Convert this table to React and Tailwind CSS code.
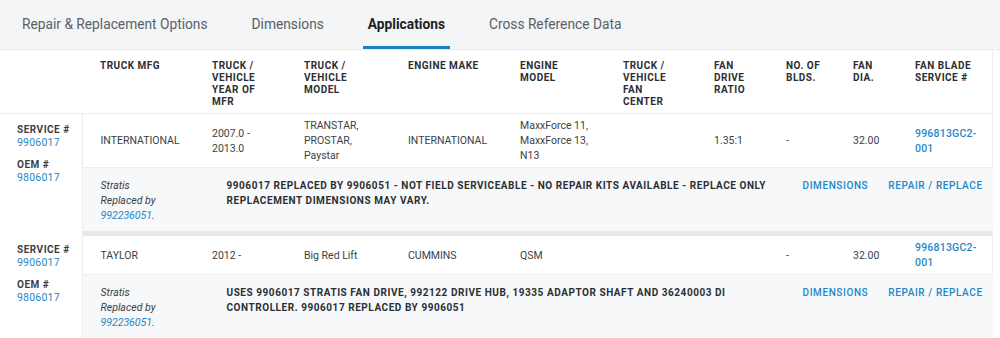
import React from 'react'

const tabs = ["Repair & Replacement Options", "Dimensions", "Applications", "Cross Reference Data"]

const cols = [
    { label: "Truck Mfg", w: "w-[112px]", pr: "pr-[10px]" },
    { label: "Truck / Vehicle Year of Mfr", w: "w-[92px]", pr: "pr-[19px]" },
    { label: "Truck / Vehicle Model", w: "w-[104px]", pr: "pr-[22px]" },
    { label: "Engine Make", w: "w-[112px]", pr: "pr-[10px]" },
    { label: "Engine Model", w: "w-[103px]", pr: "pr-[15px]" },
    { label: "Truck / Vehicle Fan Center", w: "w-[91px]", pr: "pr-[18px]" },
    { label: "Fan Drive Ratio", w: "w-[72px]", pr: "pr-[8px]" },
    { label: "No. of Blds.", w: "w-[67px]", pr: "pr-[8px]" },
    { label: "Fan Dia.", w: "w-[62px]", pr: "pr-[8px]" },
    { label: "Fan Blade Service #", w: "w-[96px]", pr: "pr-[10px]" },
]

const rows = [
    {
        cells: ["INTERNATIONAL", "2007.0 - 2013.0", "TRANSTAR, PROSTAR, Paystar", "INTERNATIONAL", "MaxxForce 11, MaxxForce 13, N13", "", "1.35:1", "-", "32.00"],
        note: "9906017 REPLACED BY 9906051 - NOT FIELD SERVICEABLE - NO REPAIR KITS AVAILABLE - REPLACE ONLY REPLACEMENT DIMENSIONS MAY VARY.",
    },
    {
        cells: ["TAYLOR", "2012 -", "Big Red Lift", "CUMMINS", "QSM", "", "", "-", "32.00"],
        note: "USES 9906017 STRATIS FAN DRIVE, 992122 DRIVE HUB, 19335 ADAPTOR SHAFT AND 36240003 DI CONTROLLER. 9906017 REPLACED BY 9906051",
    },
]

function Group({ row, last }) {
    return (
        <>
            <tr>
                <td rowSpan={2} className="align-top pl-[17px] pt-[9px] border-r border-[#e9ecef] bg-white">
                    <div className="text-[10px] font-bold tracking-[0.05em] text-[#3a3f44] leading-[13px]">SERVICE #</div>
                    <a href="#" className="block text-[10.5px] text-[#1f87c6] leading-[13px] tracking-[0.02em]">9906017</a>
                    <div className="text-[10px] font-bold tracking-[0.05em] text-[#3a3f44] leading-[13px] mt-[9px]">OEM #</div>
                    <a href="#" className="block text-[10.5px] text-[#1f87c6] leading-[13px] tracking-[0.02em]">9806017</a>
                </td>
                {row.cells.map((c, i) => (
                    <td key={i} className={`pl-[18px] ${cols[i].pr} py-[4px] text-[10.5px] leading-[15px] text-[#3a3f44] align-middle`}>
                        {c}
                    </td>
                ))}
                <td className="pl-[18px] py-[4px] pr-[10px] text-[10.5px] leading-[15px] align-middle">
                    <a href="#" className="text-[#1f87c6] font-medium tracking-[0.02em]">996813GC2-<br />001</a>
                </td>
            </tr>
            <tr>
                <td colSpan={10} className={`bg-[#f6f8fa] border-t border-[#eceff2] ${last ? "" : "border-b-[5px] border-b-[#e6e9ec]"}`}>
                    <div className="flex items-start pl-[18px] pt-[10px] pb-[8px]">
                        <div className="w-[126px] shrink-0 text-[10.5px] leading-[15px] italic text-[#3a3f44]">
                            Stratis<br />Replaced by<br />
                            <a href="#" className="text-[#1f87c6]">992236051</a>.
                        </div>
                        <div className="w-[560px] shrink-0 text-[10px] font-bold leading-[15px] tracking-[0.055em] text-[#2b2f33]">
                            {row.note}
                        </div>
                        <a href="#" className="ml-[16px] text-[10px] font-medium leading-[15px] tracking-[0.06em] text-[#1f87c6]">DIMENSIONS</a>
                        <a href="#" className="ml-[20px] text-[10px] font-medium leading-[15px] tracking-[0.06em] text-[#1f87c6]">REPAIR / REPLACE</a>
                    </div>
                </td>
            </tr>
        </>
    )
}

export default function App() {
    return (
        <div className="w-[1000px] h-[338px] overflow-hidden bg-white font-['Roboto',sans-serif]">
            <div className="flex h-[50px] bg-[#f3f5f7] border-b border-[#e9ecef]">
                {tabs.map((t) => (
                    <div key={t} className="px-[17px] flex">
                        <span className={`px-[5px] flex items-center text-[13.75px] border-b-[3px] pt-[3px] ${t === "Applications" ? "font-bold text-[#1e2124] border-[#1b80c3]" : "text-[#5a6066] border-transparent"}`}>
                            {t}
                        </span>
                    </div>
                ))}
            </div>
            <div className="w-[993px] border-r border-[#eceff2]">
                <table className="w-full table-fixed border-collapse">
                    <colgroup>
                        <col className="w-[82px]" />
                        {cols.map((c) => (
                            <col key={c.label} className={c.w} />
                        ))}
                    </colgroup>
                    <thead>
                        <tr className="border-b border-[#e9ecef]">
                            <th></th>
                            {cols.map((c) => (
                                <th key={c.label} className={`pl-[18px] ${c.pr} pt-[10px] pb-[5px] text-left align-top text-[10px] font-bold uppercase leading-[12px] tracking-[0.05em] text-[#2b2f33]`}>
                                    {c.label}
                                </th>
                            ))}
                        </tr>
                    </thead>
                    <tbody>
                        {rows.map((r, i) => (
                            <Group key={i} row={r} last={i === rows.length - 1} />
                        ))}
                    </tbody>
                </table>
            </div>
        </div>
    )
}
